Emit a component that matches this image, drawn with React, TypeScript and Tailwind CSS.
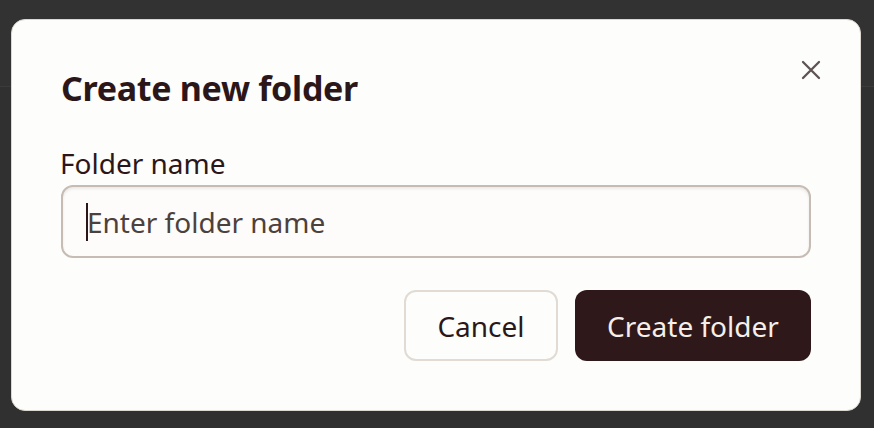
import React from "react";

export default function App() {
  return (
    <div className="relative w-[874px] h-[428px] bg-[#303030] overflow-hidden" style={{ fontFamily: '"Noto Sans", "Open Sans", sans-serif' }}>
      <div className="absolute left-0 top-0 w-full h-[87px] border-b border-[#3b3b3b] bg-[#323232]" />
      <div className="absolute left-[11px] top-[19px] w-[850px] h-[392px] rounded-[14px] border border-[#dcd7d0] bg-[#fdfdfb] px-[49px] pt-[48px] flex flex-col">
        <h1 className="text-[34px] leading-[40px] font-bold text-[#2b1719] tracking-[-0.3px]">Create new folder</h1>
        <button className="absolute right-[38px] top-[39px] w-[22px] h-[22px] flex items-center justify-center text-[#5e5353]">
          <svg width="22" height="22" viewBox="0 0 22 22" fill="none" stroke="currentColor" strokeWidth="2.3" strokeLinecap="round">
            <path d="M3 3L19 19M19 3L3 19" />
          </svg>
        </button>
        <label className="mt-[38px] text-[28px] leading-[34px] text-[#2b1719] -ml-[1px]">Folder name</label>
        <div className="mt-[5px] h-[73px] rounded-[12px] border-2 border-[#c6bcb3] bg-[#fdfcfa] shadow-[inset_0_2px_3px_rgba(0,0,0,0.08)] flex items-center pl-[23px]">
          <span className="w-[2px] h-[38px] bg-[#2b1719] -mr-[1px]" />
          <span className="text-[28px] leading-[34px] text-[#4d413d]">Enter folder name</span>
        </div>
        <div className="mt-[32px] flex justify-end gap-[17px]">
          <button className="h-[71px] w-[154px] rounded-[12px] border-2 border-[#e1dbd4] bg-[#fdfdfb] text-[28px] text-[#2b1719]">Cancel</button>
          <button className="h-[71px] w-[236px] rounded-[12px] bg-[#2e1819] text-[28px] text-[#f5efe9]">Create folder</button>
        </div>
      </div>
    </div>
  );
}
